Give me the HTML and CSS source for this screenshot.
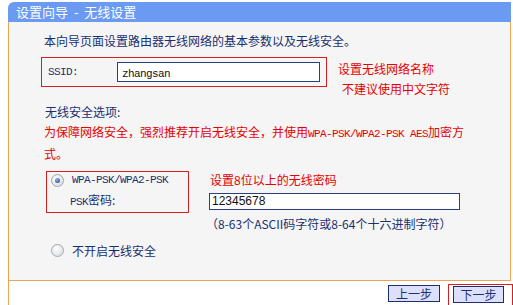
FILE: index.html
```html
<!DOCTYPE html>
<html lang="zh-CN">
<head>
    <meta charset="UTF-8">
    <title>设置向导 - 无线设置</title>
    <link rel="stylesheet" href="styles.css">
</head>
<body>
    <div class="wizard">
        <div class="title">设置向导 - 无线设置</div>
        <div class="panel">
            <p class="intro">本向导页面设置路由器无线网络的基本参数以及无线安全。</p>
            <div class="ssid-row">
                <div class="ssid-box">
                    <span class="en ssid-label">SSID:</span>
                    <div class="field ssid-field"><span class="en">zhangsan</span></div>
                </div>
                <div class="note ssid-note">
                    <div>设置无线网络名称</div>
                    <div class="indent">不建议使用中文字符</div>
                </div>
            </div>
            <p class="section">无线安全选项:</p>
            <p class="warn">为保障网络安全，强烈推荐开启无线安全，并使用<span class="en">WPA-PSK/WPA2-PSK AES</span>加密方式。</p>
            <div class="psk-row">
                <div class="psk-box">
                    <div class="opt"><span class="radio on"></span><span class="en">WPA-PSK/WPA2-PSK</span></div>
                    <div class="psk-label"><span class="en">PSK</span>密码:</div>
                </div>
                <div class="psk-side">
                    <div class="note">设置8位以上的无线密码</div>
                    <div class="field psk-field">12345678</div>
                    <div class="hint">（8-63个ASCII码字符或8-64个十六进制字符）</div>
                </div>
            </div>
            <div class="opt off-opt"><span class="radio"></span>不开启无线安全</div>
        </div>
        <div class="footer">
            <button class="btn">上一步</button>
            <span class="next-mark"><button class="btn">下一步</button></span>
        </div>
    </div>
</body>
</html>
```

FILE: styles.css
```css
body{
    margin: 0;
    background-color: #ffffff;
    font-family: "Noto Sans CJK SC", "Liberation Sans", sans-serif;
    font-size: 12px;
    color: #1a3070;
}
p{
    margin: 0;
}
.en{
    font-family: "Liberation Mono", "Noto Sans CJK SC", monospace;
    font-size: 11px;
    letter-spacing: -0.6px;
}
.wizard{
    margin: 2px 2px 0 8px;
}
.title{
    height: 20px;
    line-height: 20px;
    padding-left: 8px;
    background-color: #6a9af2;
    color: #ffffff;
    font-size: 13px;
    word-spacing: 3px;
    border-top-left-radius: 6px;
}
.panel{
    background-color: #f5f5f5;
    border-left: 1px solid #eea557;
    border-right: 1px solid #eea557;
    border-bottom: 1px solid #eea557;
    padding: 9px 0 22px 35px;
}
.intro{
    line-height: 20px;
}
.ssid-row{
    display: flex;
    margin-top: 6px;
}
.ssid-box{
    display: flex;
    align-items: center;
    width: 284px;
    height: 28px;
    margin-left: -3px;
    border: 1px solid #d42020;
}
.ssid-label{
    margin-left: 6px;
    width: 69px;
}
.field{
    background-color: #ffffff;
    border: 1px solid #27407a;
    color: #111111;
    box-sizing: border-box;
}
.ssid-field{
    width: 203px;
    height: 20px;
    line-height: 18px;
    padding-left: 4px;
}
.note{
    color: #e60000;
    line-height: 18px;
}
.ssid-note{
    margin: 2px 0 0 11px;
    line-height: 20px;
}
.indent{
    padding-left: 4px;
}
.section{
    margin-top: 3px;
    line-height: 20px;
    padding-left: 1px;
}
.warn{
    color: #e60000;
    line-height: 20px;
    width: 428px;
}
.psk-row{
    display: flex;
    margin-top: 7px;
}
.psk-box{
    width: 141px;
    height: 38px;
    margin-left: 2px;
    padding: 0 0 2px 0;
    border: 1px solid #d42020;
}
.opt{
    display: flex;
    align-items: center;
    height: 16px;
}
.psk-box .opt{
    padding-left: 4px;
}
.radio{
    position: relative;
    width: 11px;
    height: 11px;
    margin-right: 8px;
    border: 1px solid #a4a8ae;
    border-radius: 50%;
    background: radial-gradient(circle at 40% 35%, #ffffff, #d4d6da);
}
.radio.on::after{
    content: "";
    position: absolute;
    left: 3px;
    top: 3px;
    width: 5px;
    height: 5px;
    border-radius: 50%;
    background: radial-gradient(circle at 40% 35%, #8fb4ea, #1c3c8c);
}
.psk-label{
    margin-top: 2px;
    line-height: 20px;
    padding-left: 23px;
}
.psk-side{
    margin-left: 20px;
}
.psk-side .note{
    margin-left: 1px;
}
.psk-field{
    width: 251px;
    height: 17px;
    line-height: 15px;
    margin-top: 4px;
    padding-left: 2px;
    font-family: "Liberation Sans", sans-serif;
}
.hint{
    margin-top: 4px;
    line-height: 20px;
    margin-left: -3px;
}
.off-opt{
    margin: 8px 0 0 7px;
}
.footer{
    display: flex;
    justify-content: flex-end;
    align-items: flex-start;
    height: 25px;
    border-left: 1px solid #eea557;
    padding-top: 3px;
    margin-right: -2px;
    box-sizing: border-box;
}
.btn{
    height: 17px;
    padding: 0;
    margin-top: 1px;
    background-color: #dde0fa;
    border: 1px solid #1d2e6e;
    color: #1d3076;
    font-family: "Noto Sans CJK SC", sans-serif;
    font-size: 12px;
    line-height: 15px;
}
.footer > .btn{
    width: 52px;
    margin-right: 8px;
}
.next-mark{
    display: block;
    height: 22px;
    padding: 0 8px 0 4px;
    border: 1px solid #d42020;
    border-bottom: none;
}
.next-mark .btn{
    width: 51px;
}
```
